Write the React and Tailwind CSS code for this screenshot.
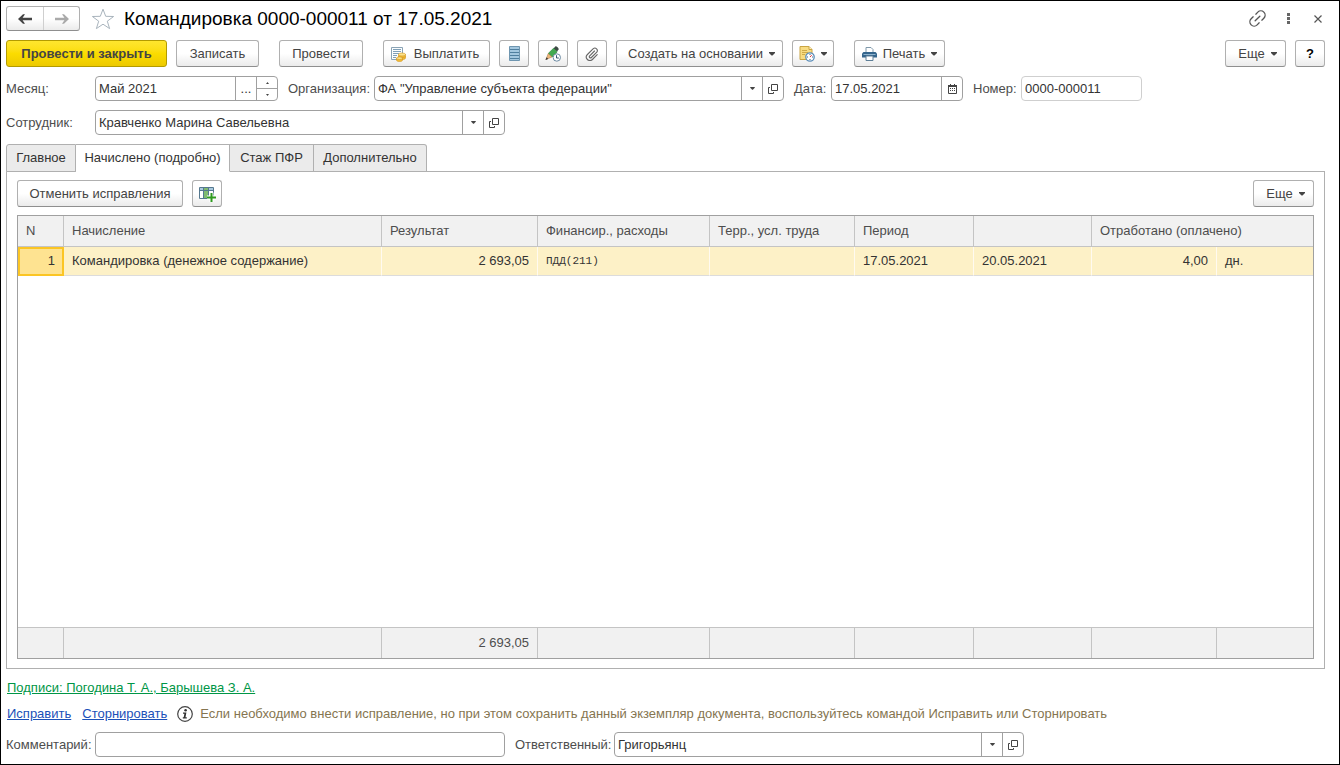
import { useState } from 'react'
import clsx from 'clsx'

const TABS = [
  { label: 'Главное', width: 'w-[70px]' },
  { label: 'Начислено (подробно)', width: 'w-[154px]' },
  { label: 'Стаж ПФР', width: 'w-[84px]' },
  { label: 'Дополнительно', width: 'w-[113px]' },
]

const ROWS = [
  {
    id: 1,
    name: 'Командировка (денежное содержание)',
    result: '2 693,05',
    finance: 'ПДД(211)',
    area: '',
    from: '17.05.2021',
    to: '20.05.2021',
    worked: '4,00',
    unit: 'дн.',
  },
]

const th = 'border-b border-r border-b-[#c4c4c4] border-r-[#c4c4c4] px-2 text-left font-normal last:border-r-0'
const td = 'border-b border-r border-b-[#dcdcdc] border-r-[#fffaf0] bg-[#fdf1c7] px-2 last:border-r-0'
const tf = 'border-t border-r border-[#c4c4c4] bg-[#f1f1f1] px-2 last:border-r-0'

function Caret({ small }) {
  return (
    <svg width={small ? 5 : 6} height={small ? 3 : 4} viewBox="0 0 6 4" className="shrink-0" aria-hidden="true">
      <path d="M0 0h6v1L3.500 3.500h-1L0 1z" fill="#444" />
    </svg>
  )
}

function OpenIcon() {
  return (
    <svg width="10" height="10" viewBox="0 0 10 10" fill="none" stroke="#444" aria-hidden="true">
      <path d="M3.500 .5h6v6h-6zM2 3.500H.5v6h5V8" />
    </svg>
  )
}

function CalendarIcon() {
  return (
    <svg width="9" height="10" viewBox="0 0 9 10" aria-hidden="true">
      <path d="M.5 1.500h8v8h-8z" fill="#fff" stroke="#444" />
      <path d="M0 1h9v2H0zM2 0h1v2H2zM6 0h1v2H6z" fill="#444" />
      <path d="M2 4h1v1H2zM4 4h1v1H4zM6 4h1v1H6zM2 6h1v1H2zM4 6h1v1H4zM6 6h1v1H6z" fill="#444" />
    </svg>
  )
}

function ArrowIcon({ color, flip }) {
  return (
    <svg width="14" height="10" viewBox="0 0 14 10" className={clsx(flip && '-scale-x-100')} aria-hidden="true">
      <path d="M0 5L5 .3h2L4.600 3.800H14v2.400H4.600L7 9.700H5z" fill={color} />
    </svg>
  )
}

function StarIcon() {
  return (
    <svg width="24" height="22" viewBox="0 0 24 22" aria-hidden="true">
      <path d="M12 1.200l2.700 7.100 7.900.2-6.300 4.700 2.300 7.400-6.600-4.400-6.600 4.400 2.300-7.400L1.400 8.500l7.900-.2z" fill="#fff" stroke="#a9b4bd" />
    </svg>
  )
}

function LinkIcon() {
  return (
    <svg width="17" height="17" viewBox="3 3 18 18" fill="none" stroke="#555" strokeWidth="1.400" strokeLinecap="round" aria-hidden="true">
      <path d="M10 16.500H7a4.500 4.500 0 0 1 0-9h3M14 7.500h3a4.500 4.500 0 0 1 0 9h-3M8.500 12h7" transform="rotate(-45 12 12)" />
    </svg>
  )
}

function PayIcon() {
  return (
    <svg width="16" height="16" viewBox="0 0 16 16" aria-hidden="true">
      <path d="M1.500 1.500h11v12h-11z" fill="#fbfdfe" stroke="#8aa3b5" />
      <path d="M3 3.500h8M3 5.500h8M3 7.500h6M3 9.500h4M3 11.500h3" stroke="#7fa0b8" />
      <path d="M8.500 8.500v3.500c0 2 7 2 7 0V8.500z" fill="#f2bd3a" stroke="#d2941b" strokeWidth=".6" />
      <path d="M8.500 10.300c0 1.700 7 1.700 7 0" fill="none" stroke="#d2941b" strokeWidth=".6" />
      <ellipse cx="12" cy="8.500" rx="3.500" ry="1.500" fill="#fce28a" stroke="#d2941b" strokeWidth=".6" />
      <path d="M6.500 12.200v2c0 1.700 6 1.700 6 0v-2z" fill="#f2bd3a" stroke="#d2941b" strokeWidth=".6" />
      <ellipse cx="9.500" cy="12.200" rx="3" ry="1.300" fill="#fce28a" stroke="#d2941b" strokeWidth=".6" />
    </svg>
  )
}

function ListIcon() {
  return (
    <svg width="11" height="15" viewBox="0 0 11 15" aria-hidden="true">
      <path d="M.5 .5h10v14H.5z" fill="#a3c7df" stroke="#6f96b0" />
      <path d="M1 3.500h9M1 6.500h9M1 9.500h9M1 12.500h9" stroke="#4f7f9f" />
    </svg>
  )
}

function PencilClockIcon() {
  return (
    <svg width="16" height="16" viewBox="0 0 16 16" aria-hidden="true">
      <path d="M8.500 2.500L10.500 .3c1.500 0 3 1.500 3.300 3L12 5.500z" fill="#3d4a45" />
      <path d="M8.500 2.300L12.200 6 7 11 3.200 7.500z" fill="#43aa50" stroke="#26803a" strokeWidth=".6" />
      <path d="M3.200 7.500L7 11l-6 2.500z" fill="#ecb67a" stroke="#a8743d" strokeWidth=".5" />
      <path d="M1.700 11.200L.4 14l2.800-1.100z" fill="#333" />
      <circle cx="11.800" cy="11.500" r="3.700" fill="#fff" stroke="#6d8ba3" />
      <path d="M11.500 9.200v2.800h2.300" fill="none" stroke="#35566f" />
    </svg>
  )
}

function ClipIcon() {
  return (
    <svg width="14" height="14" viewBox="0 0 14 14" fill="none" stroke="#666" strokeWidth="1.100" strokeLinecap="round" aria-hidden="true">
      <path d="M9.500 4L4.700 8.800a1.200 1.200 0 0 0 1.700 1.700l5.400-5.400a2.500 2.500 0 0 0-3.500-3.500L2.400 7.500a3.500 3.500 0 0 0 5 5l4.800-4.800" />
    </svg>
  )
}

function NoteClockIcon() {
  return (
    <svg width="16" height="16" viewBox="0 0 16 16" aria-hidden="true">
      <path d="M1 .5h9l3 3v10H1z" fill="#f8dc82" stroke="#c9a544" />
      <path d="M10 .5v3h3" fill="#fff3c4" stroke="#c9a544" />
      <path d="M3 4.500h5M3 6.500h6M3 8.500h3" stroke="#d0ab48" />
      <circle cx="11" cy="11" r="4.200" fill="#fff" stroke="#5b8db8" strokeWidth="1.300" />
      <path d="M11 8v1M11 13v1M8 11h1M13 11h1" stroke="#35648c" />
      <path d="M12.700 9.200L11 11" stroke="#d33" />
    </svg>
  )
}

function PrinterIcon() {
  return (
    <svg width="15" height="14" viewBox="0 0 15 14" aria-hidden="true">
      <path d="M4 .5h5l2 2V6H4z" fill="#fff" stroke="#7f98aa" />
      <path d="M1.500 5h12L15 6.500v4H0v-4z" fill="#34658c" />
      <path d="M1.500 7.500h12" stroke="#8fb4cf" />
      <path d="M4 9h7v4.500H4z" fill="#fff" stroke="#5e7f97" />
    </svg>
  )
}

function ColumnsAddIcon() {
  return (
    <svg width="17" height="16" viewBox="0 0 17 16" aria-hidden="true">
      <path d="M.5 1.500h14v11H.5z" fill="#fff" stroke="#55788f" />
      <path d="M1 2h13v2H1z" fill="#a9c9de" />
      <path d="M5 2h4v10H5z" fill="#7fba6f" />
      <path d="M1 4.500h13M4.500 2v10M9.500 2v10" stroke="#55788f" />
      <path d="M10.500 6.500h4v3H17v4h-2.500V16h-4v-2.500H8v-4h2.500z" fill="#fff" />
      <path d="M11.500 7h2v3.500H17v2h-3.500V16h-2v-3.500H8v-2h3.500z" fill="#2f9a1f" />
    </svg>
  )
}

function InfoIcon() {
  return (
    <svg width="16" height="16" viewBox="0 0 16 16" className="shrink-0" aria-hidden="true">
      <circle cx="8" cy="8" r="7.300" fill="#fff" stroke="#444" strokeWidth="1.200" />
      <circle cx="8.600" cy="4.300" r="1.300" fill="#333" />
      <path d="M6 6.500h3.400L8.500 11.300h1.300v1.200H5.800v-1.200h.9l.7-3.600H6z" fill="#333" />
    </svg>
  )
}

function Button({ primary, className, children, ...rest }) {
  return (
    <button
      type="button"
      className={clsx(
        'flex h-[27px] shrink-0 items-center justify-center rounded-[3px] border whitespace-nowrap',
        primary
          ? 'border-[#b39b00] bg-linear-to-b from-[#ffe62e] via-[#fbdc00] to-[#edc900] font-bold text-[#444]'
          : 'border-[#b0b0b0] border-b-[#8f8f8f] bg-linear-to-b from-white via-white to-[#ebebeb] text-[#444]',
        className,
      )}
      {...rest}
    >
      {children}
    </button>
  )
}

function Field({ id, label, labelClass, className, value, actions, muted }) {
  return (
    <div className="flex items-center">
      <label htmlFor={id} className={clsx('shrink-0 text-[#4d4d4d]', labelClass)}>{label}</label>
      <div
        className={clsx(
          'flex h-[25px] overflow-hidden rounded-[4px] border bg-white',
          muted ? 'border-[#cfcfcf]' : 'border-[#a0a0a0]',
          className,
        )}
      >
        <input id={id} defaultValue={value} readOnly={muted} className="min-w-0 flex-1 px-[3px] text-[#333] outline-none" />
        {actions}
      </div>
    </div>
  )
}

function FieldButton({ children, ...rest }) {
  return (
    <button type="button" className="flex w-[21px] shrink-0 items-center justify-center border-l border-[#a0a0a0]" {...rest}>
      {children}
    </button>
  )
}

function RefActions() {
  return (
    <>
      <FieldButton aria-label="Выбрать из списка"><Caret small /></FieldButton>
      <FieldButton aria-label="Открыть"><OpenIcon /></FieldButton>
    </>
  )
}

function AccrualsTable() {
  return (
    <table className="w-full table-fixed border-separate border-spacing-0 border border-[#a0a0a0]">
      <colgroup>
        <col className="w-[46px]" />
        <col />
        <col className="w-[156px]" />
        <col className="w-[172px]" />
        <col className="w-[145px]" />
        <col className="w-[119px]" />
        <col className="w-[118px]" />
        <col className="w-[125px]" />
        <col className="w-[96px]" />
      </colgroup>
      <thead>
        <tr className="h-[31px] bg-[#f1f1f1] text-[#4d4d4d]">
          <th className={th}>N</th>
          <th className={th}>Начисление</th>
          <th className={th}>Результат</th>
          <th className={th}>Финансир., расходы</th>
          <th className={th}>Терр., усл. труда</th>
          <th className={th}>Период</th>
          <th className={th} aria-label="Окончание периода" />
          <th className={th} colSpan={2}>Отработано (оплачено)</th>
        </tr>
      </thead>
      <tbody className="text-[#333]">
        {ROWS.map(r => (
          <tr key={r.id} className="h-[29px]">
            <td className={clsx(td, 'text-right outline-2 -outline-offset-2 outline-[#fbc524] bg-[#fee391]')}>{r.id}</td>
            <td className={td}>{r.name}</td>
            <td className={clsx(td, 'text-right')}>{r.result}</td>
            <td className={clsx(td, 'font-["Liberation_Mono",monospace] text-[11px]')}>{r.finance}</td>
            <td className={td}>{r.area}</td>
            <td className={td}>{r.from}</td>
            <td className={td}>{r.to}</td>
            <td className={clsx(td, 'text-right')}>{r.worked}</td>
            <td className={td}>{r.unit}</td>
          </tr>
        ))}
        <tr>
          <td colSpan={9} />
        </tr>
      </tbody>
      <tfoot>
        <tr className="h-[31px] text-[#4d4d4d]">
          <td className={tf} />
          <td className={tf} />
          <td className={clsx(tf, 'text-right')}>2 693,05</td>
          <td className={tf} />
          <td className={tf} />
          <td className={tf} />
          <td className={tf} />
          <td className={tf} />
          <td className={tf} />
        </tr>
      </tfoot>
    </table>
  )
}

function App() {
  const [tab, setTab] = useState(1)

  return (
    <div className='flex min-h-screen flex-col border border-black bg-white px-[5px] pt-[5px] pb-[7px] font-["Liberation_Sans",Arial,sans-serif] text-[13px] leading-4 text-[#333]'>

      <header className="flex h-[25px] items-center">
        <div className="flex h-[25px] overflow-hidden rounded-[3px] border border-[#b0b0b0] border-b-[#8f8f8f] bg-linear-to-b from-white via-white to-[#ebebeb]">
          <button type="button" aria-label="Назад" className="flex w-9 items-center justify-center"><ArrowIcon color="#444" /></button>
          <button type="button" aria-label="Вперед" className="flex w-9 items-center justify-center border-l border-[#cfcfcf]"><ArrowIcon color="#aaa" flip /></button>
        </div>
        <button type="button" aria-label="В избранное" className="mr-[9px] ml-[11px]"><StarIcon /></button>
        <h1 className="flex-1 text-[19px] leading-6 text-black">Командировка 0000-000011 от 17.05.2021</h1>
        <div className="flex items-center gap-4 pr-3">
          <button type="button" aria-label="Ссылка"><LinkIcon /></button>
          <button type="button" aria-label="Меню" className="w-3">
            <svg width="3" height="11" viewBox="0 0 3 11" className="mx-auto" aria-hidden="true"><path d="M0 0h3v3H0zM0 4h3v3H0zM0 8h3v3H0z" fill="#666" /></svg>
          </button>
          <button type="button" aria-label="Закрыть" className="ml-1">
            <svg width="8" height="8" viewBox="0 0 8 8" aria-hidden="true"><path d="M.5 .5l7 7M7.500 .5l-7 7" stroke="#555" strokeWidth="1.200" /></svg>
          </button>
        </div>
      </header>

      <div className="mt-[9px] flex items-center gap-[9px] pr-[9px]">
        <Button primary className="w-[161px]">Провести и закрыть</Button>
        <Button className="w-[83px]">Записать</Button>
        <Button className="ml-[11px] w-[84px]">Провести</Button>
        <Button className="ml-[11px] w-[107px] gap-2 pr-1"><PayIcon />Выплатить</Button>
        <Button className="w-[30px]" aria-label="Реестр"><ListIcon /></Button>
        <Button className="w-[30px]" aria-label="Отложенное редактирование"><PencilClockIcon /></Button>
        <Button className="w-[30px]" aria-label="Присоединенные файлы"><ClipIcon /></Button>
        <Button className="w-[167px] gap-[6px] pl-1">Создать на основании<Caret /></Button>
        <Button className="w-[42px] gap-[6px]" aria-label="Напоминания"><NoteClockIcon /><Caret /></Button>
        <Button className="ml-[11px] w-[91px] gap-[6px]"><PrinterIcon />Печать<Caret /></Button>
        <Button className="ml-auto w-[61px] gap-[6px] pl-1">Еще<Caret /></Button>
        <Button className="w-[30px] text-black" aria-label="Справка"><b>?</b></Button>
      </div>

      <div className="mt-[9px] flex items-center">
        <Field
          id="month"
          label="Месяц:"
          labelClass="w-[89px]"
          className="w-[183px]"
          value="Май 2021"
          actions={
            <>
              <FieldButton aria-label="Выбрать">...</FieldButton>
              <div className="flex w-[21px] flex-col border-l border-[#a0a0a0]">
                <button type="button" aria-label="Больше" className="flex flex-1 items-center justify-center border-b border-[#a0a0a0]">
                  <svg width="3" height="2" viewBox="0 0 3 2" aria-hidden="true"><path d="M0 2h3L1.500 0z" fill="#444" /></svg>
                </button>
                <button type="button" aria-label="Меньше" className="flex flex-1 items-center justify-center">
                  <svg width="3" height="2" viewBox="0 0 3 2" aria-hidden="true"><path d="M0 0h3L1.500 2z" fill="#444" /></svg>
                </button>
              </div>
            </>
          }
        />
        <Field id="org" label="Организация:" labelClass="ml-[10px] w-[86px]" className="w-[410px]" value={'ФА "Управление субъекта федерации"'} actions={<RefActions />} />
        <Field
          id="date"
          label="Дата:"
          labelClass="ml-[10px] w-[37px]"
          className="w-[132px]"
          value="17.05.2021"
          actions={<FieldButton aria-label="Календарь"><CalendarIcon /></FieldButton>}
        />
        <Field id="number" label="Номер:" labelClass="ml-[10px] w-[48px]" className="w-[121px]" value="0000-000011" muted />
      </div>

      <div className="mt-[9px]">
        <Field id="employee" label="Сотрудник:" labelClass="w-[89px]" className="w-[410px]" value="Кравченко Марина Савельевна" actions={<RefActions />} />
      </div>

      <div className="mt-[9px] flex" role="tablist">
        {TABS.map((t, i) => (
          <button
            key={t.label}
            type="button"
            role="tab"
            aria-selected={i === tab}
            onClick={() => setTab(i)}
            className={clsx(
              'relative -mb-px flex h-[28px] items-center justify-center border border-l-0 border-[#b0b0b0] whitespace-nowrap first:rounded-tl-[3px] first:border-l last:rounded-tr-[3px]',
              t.width,
              i === tab ? 'border-b-white bg-white' : 'bg-[#ebebeb]',
            )}
          >
            {t.label}
          </button>
        ))}
      </div>

      <main className="mr-[9px] flex flex-1 flex-col border border-[#b0b0b0] px-[10px] pt-2 pb-[9px]">
        <div className="mb-2 flex gap-[9px]">
          <Button className="w-[166px]">Отменить исправления</Button>
          <Button className="w-[30px]" aria-label="Настроить колонки"><ColumnsAddIcon /></Button>
          <Button className="ml-auto w-[61px] gap-[6px] pl-1">Еще<Caret /></Button>
        </div>
        <div className="grid flex-1">
          <AccrualsTable />
        </div>
      </main>

      <div className="mt-[11px] pl-px">
        <a href="#signatures" className="text-[#009646] underline">Подписи: Погодина Т. А., Барышева З. А.</a>
      </div>

      <div className="mt-[10px] flex items-center pl-px">
        <a href="#fix" className="mr-[11px] text-[#1b50b8] underline">Исправить</a>
        <a href="#reverse" className="mr-[10px] text-[#1b50b8] underline">Сторнировать</a>
        <InfoIcon />
        <p className="ml-[7px] text-[#857550]">
          Если необходимо внести исправление, но при этом сохранить данный экземпляр документа, воспользуйтесь командой Исправить или Сторнировать
        </p>
      </div>

      <footer className="mt-[10px] flex items-center">
        <Field id="comment" label="Комментарий:" labelClass="w-[89px]" className="w-[410px]" value="" />
        <Field id="responsible" label="Ответственный:" labelClass="ml-[10px] w-[99px]" className="w-[410px]" value="Григорьянц" actions={<RefActions />} />
      </footer>

    </div>
  )
}

export default App
